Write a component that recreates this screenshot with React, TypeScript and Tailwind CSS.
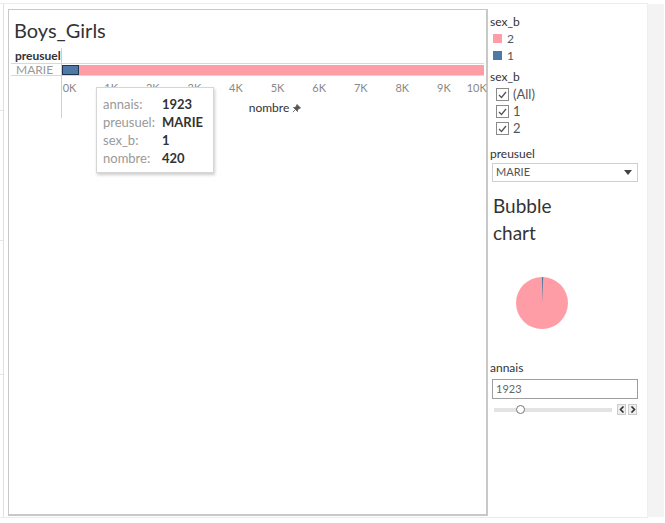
import React from "react";

const ticks = ["0K", "1K", "2K", "3K", "4K", "5K", "6K", "7K", "8K", "9K"];

function Check({ label }: { label: string }) {
  return (
    <div className="flex items-center gap-[4px] h-[17px]">
      <div className="w-[13px] h-[13px] border border-[#8a8a8a] bg-white flex items-center justify-center">
        <svg width="9" height="8" viewBox="0 0 9 8">
          <path d="M1 4 L3.5 6.5 L8 1" fill="none" stroke="#555" strokeWidth="1.3" />
        </svg>
      </div>
      <span className="text-[13px] text-[#555]">{label}</span>
    </div>
  );
}

export default function App() {
  return (
    <div className="w-[665px] h-[523px] bg-white flex flex-col text-[#333]" style={{ fontFamily: "Lato, 'Noto Sans', sans-serif" }}>
      <div className="h-[4px] w-[648px] border-b border-[#ececec]" />
      <div className="flex flex-1">
        {/* left rail */}
        <div className="w-[4px] border-r border-[#e0e0e0] flex flex-col">
          <div className="h-[107px] border-b border-[#e6e6e6]" />
          <div className="h-[130px] border-b border-[#e6e6e6]" />
          <div className="h-[134px] border-b border-[#e6e6e6]" />
        </div>

        {/* main sheet */}
        <div className="ml-[4px] mt-[5px] w-[480px] h-[507px] border border-[#c8c8c8] border-r-2 border-b-2 bg-white relative">
          <div className="pl-[5px] pt-[8px] text-[20px] leading-[24px] text-[#333]">Boys_Girls</div>
          <div className="mt-[8px] flex">
            <div className="w-[56px] flex flex-col">
              <div className="pl-[6px] h-[12px] text-[12px] leading-[12px] font-bold text-[#333]">preusuel</div>
              <div className="mt-[1px] ml-[2px] h-[13px] border-y border-[#d8d8d8] -mr-[1px] text-[12px] leading-[11px] text-[#999] pl-[5px]">MARIE</div>
            </div>
            <div className="flex-1 border-l border-[#d0d0d0] h-[70px] -mt-[2px]">
              <div className="h-[15px]" />
              <div className="h-[13px] border-y border-[#d8d8d8] flex items-center mr-[3px]">
                <div className="w-[17px] h-[10px] bg-[#4e79a7] border border-[#1f3550]" />
                <div className="flex-1 h-[10px] bg-[#ff9da7]" />
              </div>
              <div className="flex mt-[5px] text-[11px] leading-[14px] text-[#888]">
                {ticks.map((t) => (
                  <div key={t} className="w-[41.6px] shrink-0 pl-[1px]">{t}</div>
                ))}
                <div className="-ml-[11px]">10K</div>
              </div>
              <div className="mt-[4px] pl-[187px] text-[12px] text-[#333] flex items-center gap-[3px]">
                nombre
                <svg width="9" height="9" viewBox="0 0 9 9">
                  <path d="M5 0.5 L8.5 4 L7 4.5 L5.5 6 L5.5 7.5 L1.5 3.5 L3 3.5 L4.5 2 Z M3 6 L0.8 8.2" fill="#555" stroke="#555" strokeWidth="0.8" />
                </svg>
              </div>
            </div>
          </div>

          {/* tooltip */}
          <div className="absolute left-[87px] top-[77px] w-[118px] h-[86px] bg-white border border-[#d6d6d6] shadow-[1px_2px_3px_rgba(0,0,0,0.2)] pl-[6px] pt-[7px] text-[13px] leading-[18px]">
            {[
              ["annais:", "1923"],
              ["preusuel:", "MARIE"],
              ["sex_b:", "1"],
              ["nombre:", "420"],
            ].map(([k, v]) => (
              <div key={k} className="flex">
                <span className="w-[59px] text-[#999]">{k}</span>
                <span className="font-bold text-[#333]">{v}</span>
              </div>
            ))}
          </div>
        </div>

        {/* right panel */}
        <div className="w-[159px] pl-[2px] pt-[10px] flex flex-col">
          <div className="text-[12px] leading-[16px] text-[#333]">sex_b</div>
          <div className="flex items-center gap-[5px] h-[17px] pl-[3px]">
            <div className="w-[9px] h-[9px] bg-[#ff9da7]" />
            <span className="text-[12px] text-[#555]">2</span>
          </div>
          <div className="flex items-center gap-[5px] h-[17px] pl-[3px]">
            <div className="w-[9px] h-[9px] bg-[#4e79a7]" />
            <span className="text-[12px] text-[#555]">1</span>
          </div>
          <div className="mt-[5px] text-[12px] leading-[16px] text-[#333]">sex_b</div>
          <div className="pl-[6px] mt-[1px]">
            <Check label="(All)" />
            <Check label="1" />
            <Check label="2" />
          </div>
          <div className="mt-[9px] text-[12px] leading-[16px] text-[#333]">preusuel</div>
          <div className="mt-[1px] ml-[2px] w-[146px] h-[19px] border border-[#cfcfcf] flex items-center justify-between pl-[3px] pr-[5px]">
            <span className="text-[11px] text-[#555]">MARIE</span>
            <svg width="8" height="5" viewBox="0 0 8 5"><path d="M0 0 L8 0 L4 5 Z" fill="#444" /></svg>
          </div>
          <div className="mt-[10px] pl-[3px] text-[19px] leading-[27px] text-[#333]">
            Bubble
            <br />
            chart
          </div>
          <div className="mt-[30px] pl-[25px]">
            <svg width="54" height="54" viewBox="0 0 54 54">
              <circle cx="27" cy="27" r="26" fill="#ff9da7" />
              <path d="M27 27 L27 1 A26 26 0 0 1 28.2 1 Z" fill="#4e79a7" />
            </svg>
          </div>
          <div className="mt-[30px] text-[12px] leading-[16px] text-[#333]">annais</div>
          <div className="mt-[3px] ml-[2px] w-[146px] h-[20px] border border-[#9e9e9e] flex items-center pl-[3px]">
            <span className="text-[11px] text-[#666]">1923</span>
          </div>
          <div className="mt-[5px] ml-[4px] flex items-center gap-[5px]">
            <div className="relative w-[118px] h-[4px] bg-[#e3e3e3] flex items-center">
              <div className="absolute left-[22px] w-[9px] h-[9px] rounded-full bg-white border border-[#777]" />
            </div>
            <div className="flex gap-[2px]">
              <div className="w-[9px] h-[11px] bg-[#eee] border border-[#ccc] flex items-center justify-center">
                <svg width="6" height="7" viewBox="0 0 6 7"><path d="M4.5 0.5 L1.5 3.5 L4.5 6.5" fill="none" stroke="#333" strokeWidth="1.6" /></svg>
              </div>
              <div className="w-[9px] h-[11px] bg-[#eee] border border-[#ccc] flex items-center justify-center">
                <svg width="6" height="7" viewBox="0 0 6 7"><path d="M1.5 0.5 L4.5 3.5 L1.5 6.5" fill="none" stroke="#333" strokeWidth="1.6" /></svg>
              </div>
            </div>
          </div>
        </div>

        {/* scroll gutter */}
        <div className="w-[17px] bg-[#f3f3f3] border-l border-[#efefef]" />
      </div>
      <div className="h-[6px] w-[648px] border-t border-[#ececec]" />
    </div>
  );
}
